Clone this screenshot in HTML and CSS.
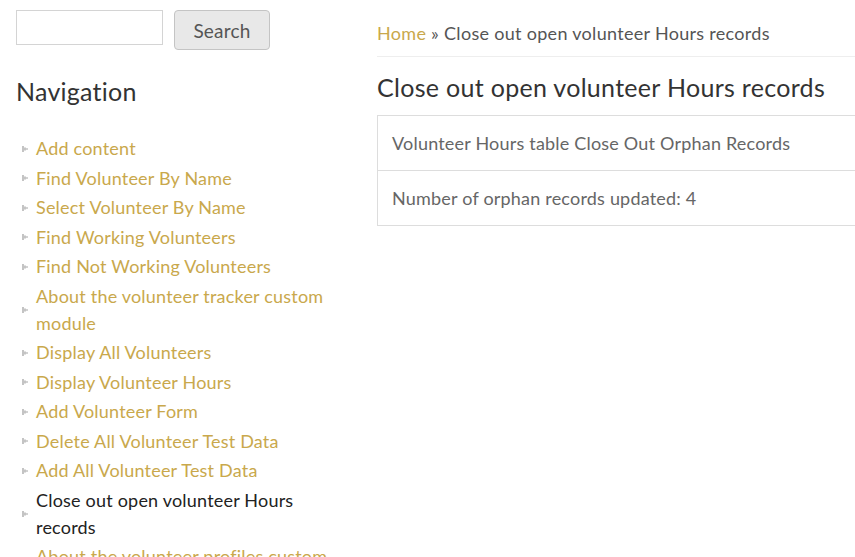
FILE: index.html
```html
<!DOCTYPE html>
<html>
<head>
<meta charset="utf-8">
<link rel="stylesheet" href="styles.css">
</head>
<body>
<div class="page">
  <aside class="sidebar">
    <form class="search">
      <input class="search-input" type="text">
      <button class="search-btn" type="button">Search</button>
    </form>
    <h2 class="nav-title">Navigation</h2>
    <ul class="menu">
      <li><svg class="leaf" viewBox="0 0 6 8"><path d="M0 1h2v6h-2zM2 2.5h2v3h-2zM4 3.3h2v1.4h-2z" fill="#c4c4c4"/></svg><a href="#">Add content</a></li>
      <li><svg class="leaf" viewBox="0 0 6 8"><path d="M0 1h2v6h-2zM2 2.5h2v3h-2zM4 3.3h2v1.4h-2z" fill="#c4c4c4"/></svg><a href="#">Find Volunteer By Name</a></li>
      <li><svg class="leaf" viewBox="0 0 6 8"><path d="M0 1h2v6h-2zM2 2.5h2v3h-2zM4 3.3h2v1.4h-2z" fill="#c4c4c4"/></svg><a href="#">Select Volunteer By Name</a></li>
      <li><svg class="leaf" viewBox="0 0 6 8"><path d="M0 1h2v6h-2zM2 2.5h2v3h-2zM4 3.3h2v1.4h-2z" fill="#c4c4c4"/></svg><a href="#">Find Working Volunteers</a></li>
      <li><svg class="leaf" viewBox="0 0 6 8"><path d="M0 1h2v6h-2zM2 2.5h2v3h-2zM4 3.3h2v1.4h-2z" fill="#c4c4c4"/></svg><a href="#">Find Not Working Volunteers</a></li>
      <li><svg class="leaf" viewBox="0 0 6 8"><path d="M0 1h2v6h-2zM2 2.5h2v3h-2zM4 3.3h2v1.4h-2z" fill="#c4c4c4"/></svg><a href="#">About the volunteer tracker custom module</a></li>
      <li><svg class="leaf" viewBox="0 0 6 8"><path d="M0 1h2v6h-2zM2 2.5h2v3h-2zM4 3.3h2v1.4h-2z" fill="#c4c4c4"/></svg><a href="#">Display All Volunteers</a></li>
      <li><svg class="leaf" viewBox="0 0 6 8"><path d="M0 1h2v6h-2zM2 2.5h2v3h-2zM4 3.3h2v1.4h-2z" fill="#c4c4c4"/></svg><a href="#">Display Volunteer Hours</a></li>
      <li><svg class="leaf" viewBox="0 0 6 8"><path d="M0 1h2v6h-2zM2 2.5h2v3h-2zM4 3.3h2v1.4h-2z" fill="#c4c4c4"/></svg><a href="#">Add Volunteer Form</a></li>
      <li><svg class="leaf" viewBox="0 0 6 8"><path d="M0 1h2v6h-2zM2 2.5h2v3h-2zM4 3.3h2v1.4h-2z" fill="#c4c4c4"/></svg><a href="#">Delete All Volunteer Test Data</a></li>
      <li><svg class="leaf" viewBox="0 0 6 8"><path d="M0 1h2v6h-2zM2 2.5h2v3h-2zM4 3.3h2v1.4h-2z" fill="#c4c4c4"/></svg><a href="#">Add All Volunteer Test Data</a></li>
      <li><svg class="leaf" viewBox="0 0 6 8"><path d="M0 1h2v6h-2zM2 2.5h2v3h-2zM4 3.3h2v1.4h-2z" fill="#c4c4c4"/></svg><a href="#" class="active">Close out open volunteer Hours records</a></li>
      <li><svg class="leaf" viewBox="0 0 6 8"><path d="M0 1h2v6h-2zM2 2.5h2v3h-2zM4 3.3h2v1.4h-2z" fill="#c4c4c4"/></svg><a href="#">About the volunteer profiles custom module</a></li>
    </ul>
  </aside>
  <main class="content">
    <div class="breadcrumb"><a href="#">Home</a> » Close out open volunteer Hours records</div>
    <h1 class="page-title">Close out open volunteer Hours records</h1>
    <div class="panel">
      <div class="panel-row">Volunteer Hours table Close Out Orphan Records</div>
      <div class="panel-row">Number of orphan records updated: 4</div>
    </div>
  </main>
</div>
</body>
</html>
```

FILE: styles.css
```css
html, body {
  margin: 0;
  padding: 0;
  background: #fff;
  overflow: hidden;
}
body {
  font-family: Lato, "Open Sans", sans-serif;
  color: #333;
  width: 855px;
  height: 557px;
}
.page {
  display: flex;
  align-items: flex-start;
  width: 1000px;
}
.sidebar {
  width: 325px;
  padding-left: 16px;
  flex: none;
}
.search {
  display: flex;
  align-items: flex-start;
  gap: 11px;
  margin: 10px 0 0 0;
}
.search-input {
  box-sizing: border-box;
  width: 147px;
  height: 35px;
  border: 1px solid #d4d4d4;
  margin: 0;
  padding: 0 6px;
  background: #fff;
}
.search-btn {
  box-sizing: border-box;
  width: 96px;
  height: 40px;
  margin: 0;
  border: 1px solid #c4c4c4;
  border-radius: 4px;
  background: #e8e8e8;
  font-family: inherit;
  font-size: 19px;
  letter-spacing: 0.2px;
  color: #555;
  padding: 0;
}
.nav-title {
  margin: 26px 0 0 0;
  font-size: 25px;
  letter-spacing: 0.25px;
  font-weight: 400;
  line-height: 30px;
  color: #333;
}
.menu {
  list-style: none;
  margin: 28px 0 0 0;
  padding: 0 0 0 6px;
}
.menu li {
  display: flex;
  align-items: center;
  padding: 1px 0 1.5px 0;
  font-size: 18px;
  letter-spacing: 0.2px;
  line-height: 27px;
}
.leaf {
  width: 6px;
  height: 8px;
  flex: none;
  margin-right: 8px;
}
.menu a {
  color: #c9a84c;
  text-decoration: none;
}
.menu a.active {
  color: #222;
}
.content {
  flex: 1;
  margin-left: 36px;
}
.breadcrumb {
  padding-top: 22px;
  padding-bottom: 12px;
  font-size: 18px;
  letter-spacing: 0.3px;
  line-height: 22px;
  color: #555;
  border-bottom: 1px solid #eee;
}
.breadcrumb a {
  color: #c9a84c;
  text-decoration: none;
}
.page-title {
  margin: 15px 0 0 0;
  font-size: 25px;
  letter-spacing: 0.3px;
  font-weight: 400;
  line-height: 30px;
  color: #333;
}
.panel {
  margin-top: 13px;
  border: 1px solid #ddd;
}
.panel-row {
  padding: 15px 14px;
  font-size: 18px;
  letter-spacing: 0.2px;
  line-height: 24px;
  color: #666;
}
.panel-row + .panel-row {
  border-top: 1px solid #ddd;
}
```
